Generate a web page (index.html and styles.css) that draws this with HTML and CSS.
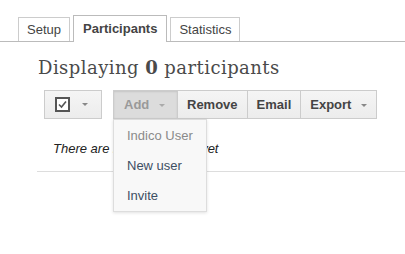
FILE: index.html
```html
<!DOCTYPE html>
<html>
    <head>
    <link rel="stylesheet" href="styles.css">
    </head>
    <body>
        <ul class="tabs">
            <li class="tab">Setup</li>
            <li class="tab active">Participants</li>
            <li class="tab">Statistics</li>
        </ul>

        <div class="content">
            <h2 class="title">Displaying <span class="num">0</span> participants</h2>

            <div class="toolbar">
                <div class="btn select-btn">
                    <svg class="check" width="15" height="15" viewBox="0 0 15 15">
                        <rect x="1" y="1" width="13" height="13" fill="#fff" stroke="#555" stroke-width="2"/>
                        <path d="M4 7.5 L6.5 10 L11 4.5" fill="none" stroke="#555" stroke-width="1.6"/>
                    </svg>
                    <span class="caret"></span>
                </div>

                <div class="btn-group">
                    <div class="btn active">Add <span class="caret"></span></div>
                    <div class="btn">Remove</div>
                    <div class="btn">Email</div>
                    <div class="btn">Export <span class="caret"></span></div>

                    <ul class="menu">
                        <li class="disabled">Indico User</li>
                        <li>New user</li>
                        <li>Invite</li>
                    </ul>
                </div>
            </div>

            <p class="empty">There are no participants yet</p>
            <div class="rule"></div>
        </div>
    </body>
</html>
```

FILE: styles.css
```css
html, body {
    height: 100%;
}

body {
    margin: 0;
    background: #fff;
    font-family: "Liberation Sans", Arial, sans-serif;
    font-size: 13px;
    color: #333;
}

ul.tabs {
    list-style: none;
    margin: 15px 0 0 0;
    padding: 0 0 0 18px;
    display: flex;
    align-items: flex-end;
    gap: 3px;
    border-bottom: 1px solid #bbb;
}

.tab {
    height: 23px;
    line-height: 23px;
    padding: 0 8px;
    border: 1px solid #ccc;
    border-bottom: none;
    color: #444;
    background: #fff;
}

.tab.active {
    height: 26px;
    line-height: 26px;
    border-color: #bbb;
    font-weight: bold;
    padding: 0 9px;
    margin-bottom: -1px;
}

.content {
    padding-left: 37px;
}

h2.title {
    margin: 15px 0 0 1px;
    font-family: "DejaVu Serif", Georgia, serif;
    font-weight: normal;
    font-size: 18px;
    color: #4a4a4a;
    letter-spacing: 0.45px;
}

.num {
    font-weight: bold;
}

.toolbar {
    display: flex;
    margin: 12px 0 0 7px;
    gap: 11px;
}

.btn {
    height: 27px;
    line-height: 27px;
    padding: 0 9px;
    border: 1px solid #ccc;
    background: linear-gradient(#f5f5f5, #ececec);
    color: #444;
    font-weight: bold;
    white-space: nowrap;
}

.select-btn {
    width: 37px;
    padding: 0 9px 0 10px;
    display: flex;
    align-items: center;
    gap: 12px;
}

.check {
    display: block;
}

.caret {
    display: inline-block;
    width: 0;
    height: 0;
    border-left: 3px solid transparent;
    border-right: 3px solid transparent;
    border-top: 3px solid #888;
    vertical-align: middle;
    margin-left: 6px;
}

.select-btn .caret {
    margin-left: 0;
}

.btn-group {
    display: flex;
    position: relative;
}

.btn-group .btn + .btn {
    border-left: none;
}

.btn.active {
    background: #dcdcdc;
    color: #999;
    box-shadow: inset 0 1px 2px rgba(0,0,0,0.1);
    width: 43px;
    padding: 0 10px;
}

.btn.active .caret {
    border-top-color: #aaa;
}

ul.menu {
    position: absolute;
    top: 29px;
    left: 0;
    width: 92px;
    margin: 0;
    padding: 1px 0 0 0;
    list-style: none;
    background: #f8f8f8;
    border: 1px solid #ddd;
    box-shadow: 0 1px 3px rgba(0,0,0,0.12);
    z-index: 2;
}

ul.menu li {
    height: 30px;
    line-height: 30px;
    padding-left: 13px;
    color: #3d4f63;
}

ul.menu li.disabled {
    color: #8a8a8a;
}

p.empty {
    margin: 22px 0 0 16px;
    font-style: italic;
    color: #222;
}

.rule {
    margin-top: 15px;
    border-top: 1px solid #ddd;
}
```
